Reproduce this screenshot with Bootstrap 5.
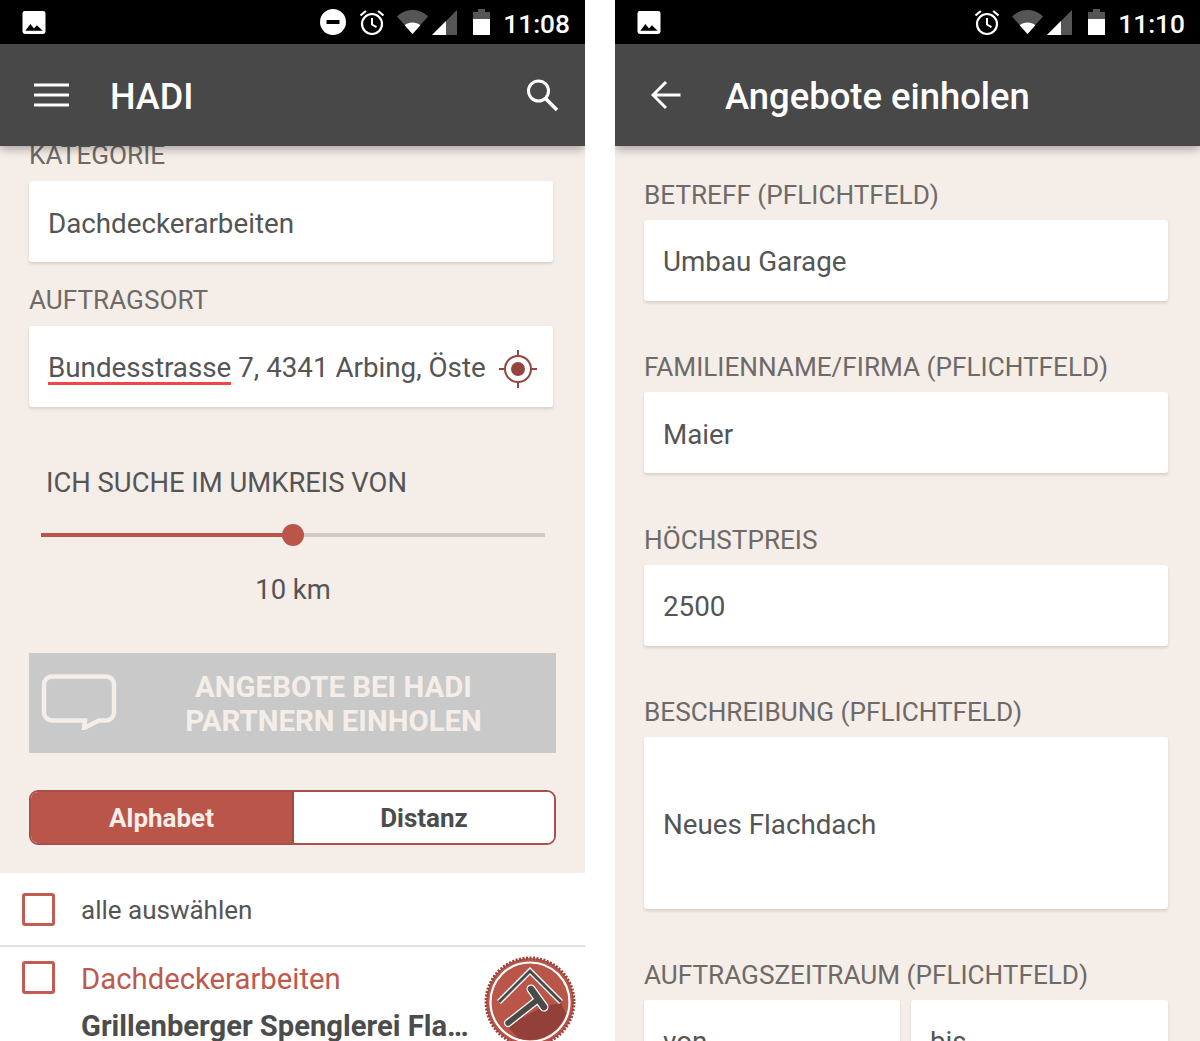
<!DOCTYPE html>
<html lang="de">
<head>
<meta charset="utf-8">
<title>HADI</title>
<link href="https://cdn.jsdelivr.net/npm/bootstrap@5.3.0/dist/css/bootstrap.min.css" rel="stylesheet">
<style>
html,body{height:1041px;overflow:hidden;background:#fff;font-family:Roboto,"Liberation Sans",sans-serif;color:#555}
.screens{width:1200px;height:1041px;gap:30px}
.phone{width:585px;height:1041px;overflow:hidden;background:#f5ede8}
.statusbar{height:44px;background:#000;color:#fff;padding:0 15px 0 22px;flex:none;position:relative;z-index:3}
.clock{font-size:26.3px;line-height:40px;font-weight:500;margin:4px 0 0 13px}
.appbar{height:102px;background:#484848;color:#fff;flex:none;position:relative;z-index:2;box-shadow:0 3px 9px rgba(0,0,0,.32);padding:0 26px 0 34px}
.appbar h1{font-size:36px;line-height:100px;margin:4px 0 0 41px;font-weight:500;color:#fff}
.appbar.back h1{font-size:36.4px;margin-left:44px;font-weight:500}
.appbar.back{padding-left:36px}
.lbl{font-size:26.15px;line-height:30px;color:#6d6a67;margin:0}
.field{background:#fff;border-radius:3px;box-shadow:0 2px 3px rgba(90,70,60,.18);font-size:27.75px;color:#555;padding:4px 19px 0;height:81px}
.left-form{padding:0 32px 0 29px;margin-top:-6px}
.spell{border-bottom:3px solid #f2454a;line-height:29px;display:inline-block;height:32px}
.addr{white-space:nowrap;overflow:hidden;width:440px;flex:none;height:40px;margin-top:-4px}
.range-title{font-size:27.4px;line-height:34px;color:#555;margin:59px 0 0 17px}
.range{height:24px;margin:23px 8px 0 12px}
.track{height:4px;background:#d3cac6}
.track-fill{height:4px;background:#b95649}
.thumb{position:absolute;top:1px;width:22px;height:22px;border-radius:50%;background:#b95649;margin-left:-11px}
.range-val{font-size:27.4px;line-height:34px;text-align:center;margin:26px 0 0 4px;color:#555}
.submit-btn{height:100px;width:527px;margin-top:46px;background:#c9c9c9;color:#f5ede8;font-size:29.4px;line-height:34px;font-weight:700;border:0;border-radius:0;padding:2px 0 0 82px;opacity:1;text-align:center}
.submit-btn svg{position:absolute;left:12px;top:21px}
.seg{width:527px;height:55px;margin-top:37px;display:flex;border:2px solid #a8504a;border-radius:9px;overflow:hidden;background:#fff}
.seg .btn{border:0;border-radius:0;font-size:26px;font-weight:700;line-height:48px;padding:0;height:100%}
.seg .seg-on{flex:0 0 263px;background:#b95649;color:#f5ede8;border-right:2px solid #a0473e}
.seg .seg-off{flex:1;background:#fff;color:#4c4c4c}
.sel-list{background:#fff;margin-top:28px;flex:1;position:relative;overflow:hidden}
.sel-head{height:74px;padding-left:22px;border-bottom:2px solid #e2e0df;font-size:26px;color:#555}
.sel-head span.txt{padding-top:3px}
.box{width:33px;height:33px;border:3.5px solid #c35c50;border-radius:3px;flex:none;margin-right:26px}
.sel-row{padding:14px 0 0 22px;height:100px}
.sel-text{padding-top:1px}
.trade{font-size:29.3px;line-height:34px;color:#bd5a4e}
.firm{font-size:29.2px;line-height:40px;font-weight:700;color:#4c4c4c;margin-top:10px;white-space:nowrap}
.badge-logo{position:absolute;left:484px;top:83px}
.right-form{padding:33.500px 32px 0 29px}
.right-form .lbl{margin-bottom:10px}
.right-form .field{margin-bottom:51.500px;width:524px}
.right-form .desc{height:172px;margin-bottom:50.500px}
.right-form .halves .field{height:81px;margin:0;align-items:flex-start;padding-top:21px}
.halves{gap:11px;width:524px}
.right-form .halves .first{width:256px}
.right-form .halves .second{width:257px}
</style>
</head>
<body>
<svg width="0" height="0" class="position-absolute">
  <symbol id="i-img" viewBox="0 0 24 24"><rect x="0" y="0" width="24" height="24" rx="2.5" fill="#fff"/><path d="M3 20.5l5.2-7 3.8 4.8 3-3.4 6 5.6z" fill="#000"/></symbol>
  <symbol id="i-alarm" viewBox="0 0 26 27"><circle cx="13" cy="15" r="10" fill="none" stroke="#fff" stroke-width="2.2"/><path d="M13 9v6.5l4.5 2.6" fill="none" stroke="#fff" stroke-width="2"/><path d="M1.5 6.5L6.8 2M24.5 6.5L19.2 2" stroke="#fff" stroke-width="2.2" fill="none"/></symbol>
  <symbol id="i-wifi" viewBox="0 0 31 26"><path d="M0 7.5C4 3.5 9.5 1 15.5 1S27 3.500 31 7.500L15.500 25z" fill="#555"/><path d="M7.700 16.200C9.800 14.500 12.500 13.500 15.500 13.500s5.700 1 7.800 2.700L15.500 25z" fill="#fff"/></symbol>
  <symbol id="i-signal" viewBox="0 0 26 26"><path d="M0 26L25 1v25z" fill="#555"/><path d="M0 26L14 12v14z" fill="#fff"/></symbol>
  <symbol id="i-batt" viewBox="0 0 17 26"><path d="M5 0h7v3h5v23H0V3h5z" fill="#555"/><path d="M0 10h17v16H0z" fill="#fff"/></symbol>
</svg>
<div class="screens d-flex">

  <!-- Left screen -->
  <div class="phone d-flex flex-column">
    <div class="statusbar d-flex align-items-center">
      <svg width="24" height="23"><use href="#i-img"/></svg>
      <div class="ms-auto d-flex align-items-center">
        <svg width="26" height="26"><circle cx="13" cy="13" r="13" fill="#fff"/><rect x="6.500" y="11" width="13" height="4" fill="#000"/></svg>
        <svg width="26" height="27" style="margin-left:13px"><use href="#i-alarm"/></svg>
        <svg width="31" height="26" style="margin-left:12px"><use href="#i-wifi"/></svg>
        <svg width="26" height="26" style="margin-left:4px"><use href="#i-signal"/></svg>
        <svg width="17" height="26" style="margin-left:15px"><use href="#i-batt"/></svg>
        <span class="clock">11:08</span>
      </div>
    </div>
    <div class="appbar d-flex align-items-center">
      <svg width="35" height="24"><path d="M0 2h35M0 12h35M0 22h35" stroke="#fff" stroke-width="3.200"/></svg>
      <h1>HADI</h1>
      <svg class="ms-auto" width="34" height="34" viewBox="0 0 34 34"><circle cx="13.500" cy="13" r="10" fill="none" stroke="#fff" stroke-width="3"/><path d="M20.500 20.500L32 32" stroke="#fff" stroke-width="3.500"/></svg>
    </div>
    <div class="left-form">
      <p class="lbl">KATEGORIE</p>
      <div class="field d-flex align-items-center" style="margin-top:11px;width:524px">Dachdeckerarbeiten</div>
      <p class="lbl" style="margin-top:23px">AUFTRAGSORT</p>
      <div class="field d-flex align-items-center" style="margin-top:11px;width:524px">
        <div class="addr"><span class="spell">Bundesstrasse</span> 7, 4341 Arbing, Öste</div>
        <svg style="margin-left:10px;flex:none" width="40" height="40" viewBox="0 0 40 40"><circle cx="20" cy="20" r="13" fill="none" stroke="#94453d" stroke-width="2"/><circle cx="20" cy="20" r="7" fill="#94453d"/><path d="M20 1v7M20 32v7M1 20h7M32 20h7" stroke="#94453d" stroke-width="2"/></svg>
      </div>
      <p class="range-title">ICH SUCHE IM UMKREIS VON</p>
      <div class="range position-relative d-flex align-items-center">
        <div class="track w-100"><div class="track-fill" style="width:49.900%"></div></div>
        <div class="thumb" style="left:50%"></div>
      </div>
      <div class="range-val">10 km</div>
      <button class="btn submit-btn position-relative d-block" type="button">ANGEBOTE BEI HADI<br>PARTNERN EINHOLEN
        <svg width="76" height="56" viewBox="0 0 76 56"><path d="M11 2.500h54a8 8 0 0 1 8 8v28a8 8 0 0 1-8 8H58L43 54l1-7.500H11a8 8 0 0 1-8-8v-28a8 8 0 0 1 8-8z" fill="none" stroke="#f5ede8" stroke-width="4.500"/></svg>
      </button>
      <div class="seg" role="group">
        <button class="btn seg-on" type="button">Alphabet</button>
        <button class="btn seg-off" type="button">Distanz</button>
      </div>
    </div>
    <div class="sel-list">
      <div class="sel-head d-flex align-items-center"><span class="box"></span><span class="txt">alle auswählen</span></div>
      <div class="sel-row d-flex">
        <span class="box"></span>
        <div class="sel-text">
          <div class="trade">Dachdeckerarbeiten</div>
          <div class="firm">Grillenberger Spenglerei Fla…</div>
        </div>
      </div>
      <svg class="badge-logo" width="92" height="92" viewBox="0 0 92 92">
        <circle cx="46" cy="46" r="44" fill="#b95649" stroke="#94453d" stroke-width="3" stroke-dasharray="2 1.500"/>
        <circle cx="46" cy="46" r="39.500" fill="none" stroke="#fff" stroke-width="2.200"/>
        <circle cx="46" cy="46" r="38" fill="#b95649"/>
        <path d="M23 70L60 50 77 47 82 58A38 38 0 0 1 46 84 38 38 0 0 1 34 82z" fill="#94403a"/>
        <path d="M15 46L46 15l31 31" fill="none" stroke="#fff" stroke-width="5.500"/>
        <path d="M15 46L46 15l31 31" fill="none" stroke="#4a4a4a" stroke-width="3"/>
        <path d="M24 67L52 45" stroke="#fff" stroke-width="8" stroke-linecap="round"/>
        <path d="M47 33L60 51" stroke="#fff" stroke-width="9" stroke-linecap="round"/>
        <path d="M24 67L52 45" stroke="#4a4a4a" stroke-width="5.500" stroke-linecap="round"/>
        <path d="M47 33L60 51" stroke="#4a4a4a" stroke-width="6.500" stroke-linecap="round"/>
      </svg>
    </div>
  </div>

  <!-- Right screen -->
  <div class="phone d-flex flex-column">
    <div class="statusbar d-flex align-items-center">
      <svg width="24" height="23"><use href="#i-img"/></svg>
      <div class="ms-auto d-flex align-items-center">
        <svg width="26" height="27"><use href="#i-alarm"/></svg>
        <svg width="31" height="26" style="margin-left:12px"><use href="#i-wifi"/></svg>
        <svg width="26" height="26" style="margin-left:4px"><use href="#i-signal"/></svg>
        <svg width="17" height="26" style="margin-left:15px"><use href="#i-batt"/></svg>
        <span class="clock">11:10</span>
      </div>
    </div>
    <div class="appbar back d-flex align-items-center">
      <svg width="30" height="30" viewBox="0 0 30 30"><path d="M29.500 15H3M15 2L2 15l13 13" fill="none" stroke="#fff" stroke-width="3"/></svg>
      <h1>Angebote einholen</h1>
    </div>
    <div class="right-form">
      <p class="lbl">BETREFF (PFLICHTFELD)</p>
      <div class="field d-flex align-items-center">Umbau Garage</div>
      <p class="lbl">FAMILIENNAME/FIRMA (PFLICHTFELD)</p>
      <div class="field d-flex align-items-center">Maier</div>
      <p class="lbl">HÖCHSTPREIS</p>
      <div class="field d-flex align-items-center">2500</div>
      <p class="lbl">BESCHREIBUNG (PFLICHTFELD)</p>
      <div class="field desc d-flex align-items-center">Neues Flachdach</div>
      <p class="lbl">AUFTRAGSZEITRAUM (PFLICHTFELD)</p>
      <div class="d-flex halves">
        <div class="field first d-flex">von</div>
        <div class="field second d-flex">bis</div>
      </div>
    </div>
  </div>
</div>
</body>
</html>
